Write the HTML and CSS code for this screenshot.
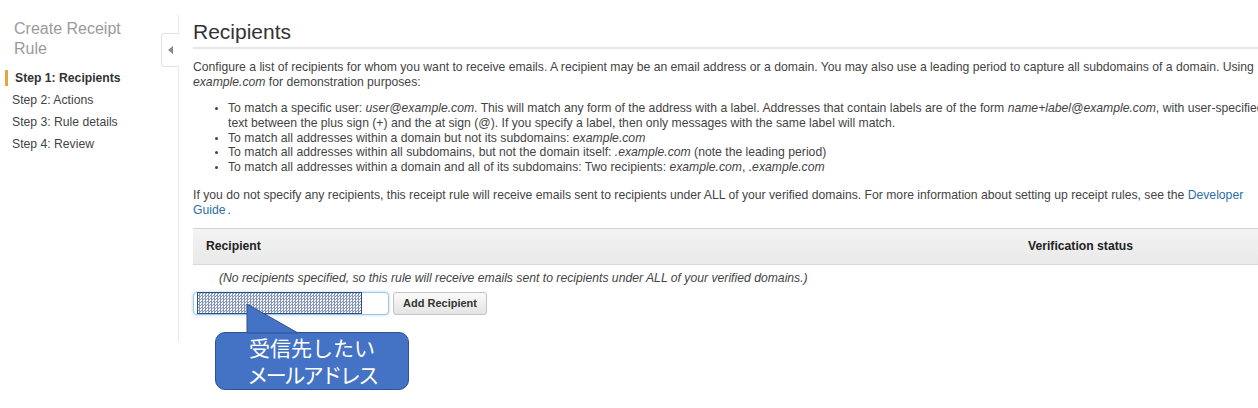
FILE: index.html
```html
<!DOCTYPE html>
<html>
<head>
<meta charset="utf-8">
<link rel="stylesheet" href="styles.css">
</head>
<body>
<div class="page">
  <aside class="sidebar">
    <div class="side-title">Create Receipt<br>Rule</div>
    <ul class="steps">
      <li class="step active">Step 1: Recipients</li>
      <li class="step">Step 2: Actions</li>
      <li class="step">Step 3: Rule details</li>
      <li class="step">Step 4: Review</li>
    </ul>
  </aside>
  <main class="main">
    <div class="collapse-tab"><span class="tri"></span></div>
    <h1 class="title">Recipients</h1>
    <p class="text">Configure a list of recipients for whom you want to receive emails. A recipient may be an email address or a domain. You may also use a leading period to capture all subdomains of a domain. Using <i>example.com</i> for demonstration purposes:</p>
    <ul class="rules">
      <li>To match a specific user: <i>user@example.com</i>. This will match any form of the address with a label. Addresses that contain labels are of the form <i>name+label@example.com</i>, with user-specified text between the plus sign (+) and the at sign (@). If you specify a label, then only messages with the same label will match.</li>
      <li>To match all addresses within a domain but not its subdomains: <i>example.com</i></li>
      <li>To match all addresses within all subdomains, but not the domain itself: <i>.example.com</i> (note the leading period)</li>
      <li>To match all addresses within a domain and all of its subdomains: Two recipients: <i>example.com</i>, <i>.example.com</i></li>
    </ul>
    <p class="text">If you do not specify any recipients, this receipt rule will receive emails sent to recipients under ALL of your verified domains. For more information about setting up receipt rules, see the <a class="link">Developer Guide</a>.</p>
    <div class="table-head">
      <div class="th th-recipient">Recipient</div>
      <div class="th th-status">Verification status</div>
    </div>
    <div class="empty">(No recipients specified, so this rule will receive emails sent to recipients under ALL of your verified domains.)</div>
    <div class="add-row">
      <div class="input"><div class="mask"></div></div>
      <button class="btn">Add Recipient</button>
    </div>
    <div class="callout">
      <svg class="pointer" width="54" height="30" viewBox="0 0 54 30">
        <polygon points="1,0 1,29 52,29" fill="#4472c4" stroke="#2f528f" stroke-width="1"/>
      </svg>
      <div class="bubble">
        <span class="l1">受信先したい</span>
        <span class="l2">メールアドレス</span>
      </div>
    </div>
  </main>
</div>
</body>
</html>
```
FILE: styles.css
```css
html, body {
  margin: 0;
  padding: 0;
  background: #fff;
  overflow: hidden;
  width: 1258px;
  height: 408px;
}
body {
  font-family: "Liberation Sans", Arial, sans-serif;
  font-size: 12.2px;
  color: #444;
}
.page {
  display: flex;
  align-items: flex-start;
  padding-top: 15px;
}
.sidebar {
  width: 178px;
  flex: none;
}
.side-title {
  font-size: 16px;
  line-height: 20px;
  color: #9a9a9a;
  padding-left: 14px;
  margin-top: 4px;
}
.steps {
  list-style: none;
  margin: 8px 0 0 0;
  padding: 0;
}
.step {
  font-size: 12.2px;
  line-height: 22px;
  color: #444;
  padding-left: 12px;
}
.step.active {
  font-weight: bold;
  color: #333;
  padding-left: 15px;
  position: relative;
}
.step.active::before {
  content: "";
  position: absolute;
  left: 5px;
  top: 3px;
  width: 3px;
  height: 16px;
  background: #e7a33e;
}
.main {
  position: relative;
  flex: none;
  width: 1082px;
  border-left: 1px solid #e8e8e8;
  padding-left: 14px;
  height: 327px;
}
.collapse-tab {
  position: absolute;
  left: -18px;
  top: 18px;
  width: 17px;
  height: 32px;
  border: 1px solid #e2e2e2;
  border-right: none;
  border-radius: 3px 0 0 3px;
  background: #fff;
  display: flex;
  align-items: center;
  justify-content: center;
}
.tri {
  width: 0;
  height: 0;
  border-top: 4px solid transparent;
  border-bottom: 4px solid transparent;
  border-right: 5px solid #888;
}
.title {
  margin: 0;
  font-weight: normal;
  font-size: 21px;
  line-height: 30px;
  color: #333;
  padding-top: 2px;
  border-bottom: 2px solid #e6e6e6;
  margin-bottom: 11px;
}
.text {
  margin: 0;
  line-height: 15px;
}
.rules {
  margin: 11px 0 13px 0;
  padding-left: 35px;
  line-height: 14.75px;
  list-style: disc;
}
.rules li::marker {
  font-size: 10px;
}
.link {
  color: #2e6ea7;
  margin-right: 2px;
}
.table-head {
  margin-top: 10px;
  height: 35px;
  display: flex;
  align-items: center;
  background: linear-gradient(#f3f3f3, #e9e9e9);
  border-top: 1px solid #d2d2d2;
  border-bottom: 1px solid #d8d8d8;
  color: #222;
  font-weight: bold;
}
.th-recipient {
  padding-left: 13px;
  width: 822px;
}
.empty {
  font-style: italic;
  color: #444;
  padding-left: 26px;
  margin-top: 6px;
  line-height: 15px;
}
.add-row {
  display: flex;
  align-items: center;
  gap: 4px;
  margin-top: 6px;
}
.input {
  width: 194px;
  height: 21px;
  border: 1px solid #9cc7ec;
  border-radius: 4px;
  box-shadow: 0 0 3px rgba(100, 160, 220, 0.5);
  background: #fff;
  position: relative;
}
.mask {
  position: absolute;
  left: 3px;
  top: -1px;
  width: 163px;
  height: 20px;
  border: 1px solid #2f4f80;
  background-color: #fff;
  background-image: repeating-conic-gradient(#8796b4 0 25%, #f2f4f8 0 50%);
  background-size: 3px 3px;
}
.btn {
  font-family: "Liberation Sans", Arial, sans-serif;
  font-size: 11px;
  font-weight: bold;
  color: #333;
  height: 23px;
  width: 94px;
  padding: 0;
  border: 1px solid #c3c3c3;
  border-radius: 3px;
  background: linear-gradient(#fafafa, #e4e4e4);
}
.callout {
  position: absolute;
  left: 36px;
  top: 289px;
  width: 194px;
}
.pointer {
  display: block;
  margin-left: 31px;
  margin-bottom: -2px;
  position: relative;
  z-index: 2;
}
.bubble {
  width: 192px;
  height: 56px;
  background: #4472c4;
  border: 1px solid #2f528f;
  border-radius: 10px;
  color: #fff;
  font-family: "Noto Sans CJK JP", sans-serif;
  font-size: 21px;
  line-height: 27px;
  display: flex;
  flex-direction: column;
  align-items: center;
  justify-content: center;
}
.l2 {
  letter-spacing: -2.5px;
}
```
